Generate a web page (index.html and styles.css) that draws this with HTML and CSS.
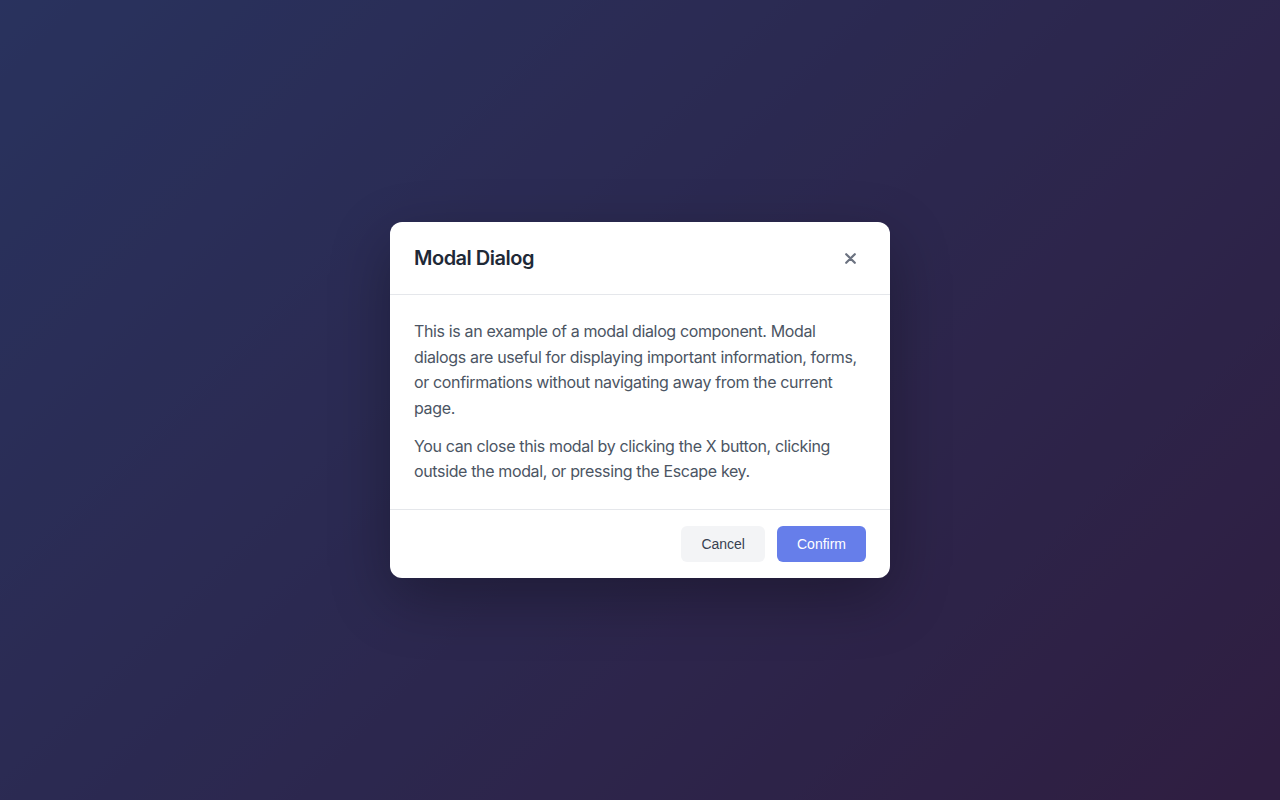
FILE: index.html
```html
<!DOCTYPE html>
<html lang="en">
<head>
<meta charset="utf-8">
<title>Modal Dialog</title>
<link rel="stylesheet" href="styles.css">
</head>
<body>
<div class="backdrop">
  <div class="overlay">
    <div class="modal" role="dialog" aria-labelledby="modal-title">
      <div class="modal-header">
        <h2 id="modal-title" class="modal-title">Modal Dialog</h2>
        <button class="close-btn" aria-label="Close">
          <svg width="11" height="11" viewBox="0 0 11 11" aria-hidden="true">
            <path d="M1.2 1.2 L9.8 9.8 M9.8 1.2 L1.2 9.8" stroke="#6b7280" stroke-width="2.2" stroke-linecap="round" fill="none"/>
          </svg>
        </button>
      </div>
      <div class="modal-body">
        <p>This is an example of a modal dialog component. Modal dialogs are useful for displaying important information, forms, or confirmations without navigating away from the current page.</p>
        <p>You can close this modal by clicking the X button, clicking outside the modal, or pressing the Escape key.</p>
      </div>
      <div class="modal-footer">
        <button class="btn btn-secondary">Cancel</button>
        <button class="btn btn-primary">Confirm</button>
      </div>
    </div>
  </div>
</div>
</body>
</html>
```
FILE: styles.css
```css
* { box-sizing: border-box; }
html, body { margin: 0; padding: 0; height: 100%; }
body {
  font-family: Inter, "Noto Sans", "Liberation Sans", sans-serif;
}
.backdrop {
  width: 100%;
  height: 100vh;
  background: linear-gradient(135deg, #667eea 0%, #764ba2 100%);
}
.overlay {
  width: 100%;
  height: 100%;
  background: rgba(0, 0, 0, 0.6);
  display: flex;
  align-items: center;
  justify-content: center;
}
.modal {
  width: 500px;
  background: #ffffff;
  border-radius: 12px;
  box-shadow: 0 20px 60px rgba(0, 0, 0, 0.3);
  overflow: hidden;
}
.modal-header {
  display: flex;
  align-items: center;
  justify-content: space-between;
  padding: 24px;
  border-bottom: 1px solid #e5e7eb;
}
.modal-title {
  margin: 0;
  font-size: 20px;
  line-height: 24px;
  font-weight: 600;
  letter-spacing: -0.5px;
  color: #1f2937;
}
.close-btn {
  width: 32px;
  height: 24px;
  border: none;
  background: transparent;
  border-radius: 6px;
  display: flex;
  align-items: center;
  justify-content: center;
  padding: 0;
  cursor: pointer;
}
.modal-body {
  padding: 24px;
  color: #4b5563;
  font-size: 16px;
  line-height: 1.6;
  letter-spacing: -0.36px;
}
.modal-body p { margin: 0; }
.modal-body p + p { margin-top: 12px; }
.modal-footer {
  display: flex;
  justify-content: flex-end;
  gap: 12px;
  padding: 16px 24px;
  border-top: 1px solid #e5e7eb;
}
.btn {
  font-family: "Liberation Sans", Arial, sans-serif;
  font-size: 14px;
  line-height: 16px;
  font-weight: 400;
  padding: 10px 20px;
  border: none;
  border-radius: 6px;
  cursor: pointer;
}
.btn-secondary {
  background: #f3f4f6;
  color: #374151;
}
.btn-primary {
  background: #667eea;
  color: #ffffff;
}
```
